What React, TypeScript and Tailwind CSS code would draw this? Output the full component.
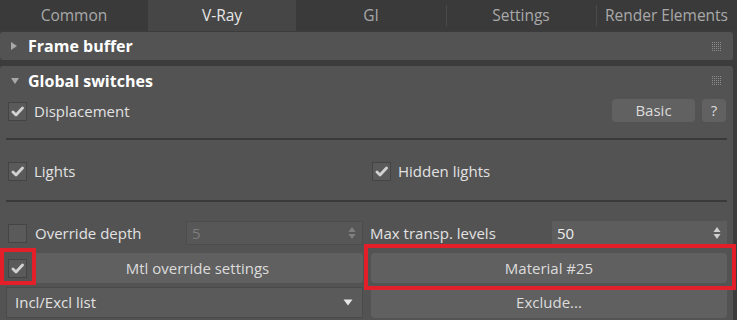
import React from "react";

const font = { fontFamily: '"Open Sans", "Noto Sans", sans-serif' };

function Check({ checked }: { checked: boolean }) {
  return (
    <div className="w-[19px] h-[19px] bg-[#5a5a5a] border border-[#444] flex items-center justify-center shrink-0">
      {checked && (
        <svg width="13" height="11" viewBox="0 0 13 11">
          <path d="M2 6 L5 9 L11.5 2" stroke="#d2d2d2" strokeWidth="2.8" fill="none" strokeLinecap="round" strokeLinejoin="round" />
        </svg>
      )}
    </div>
  );
}

function Grip() {
  const dots = [];
  for (let r = 0; r < 5; r++)
    for (let c = 0; c < 5; c++) dots.push(<rect key={r * 5 + c} x={c * 2} y={r * 2} width="1" height="1" fill="#8c8c8c" />);
  return (
    <svg width="9" height="9" viewBox="0 0 9 9" className="shrink-0">
      {dots}
    </svg>
  );
}

function SpinArrows({ color }: { color: string }) {
  return (
    <svg width="8" height="14" viewBox="0 0 8 14" className="shrink-0">
      <path d="M4 1 L7.5 6 L0.5 6 Z" fill={color} />
      <path d="M4 13 L7.5 8 L0.5 8 Z" fill={color} />
    </svg>
  );
}

function Tab({ label, active, sep }: { label: string; active?: boolean; sep?: boolean }) {
  return (
    <div
      className={`flex-1 flex items-center justify-center h-full text-[15.5px] relative ${
        active ? "bg-[#464646] text-[#e6e6e6]" : "text-[#a9a9a9]"
      }`}
    >
      {sep && <div className="absolute left-0 top-[5px] bottom-[5px] w-px bg-[#4a4a4a]" />}
      {label}
    </div>
  );
}

export default function App() {
  return (
    <div className="w-[737px] h-[320px] bg-[#3c3c3c] overflow-hidden flex flex-col" style={font}>
      {/* Tabs */}
      <div className="h-[31px] flex bg-[#3a3a3a] shrink-0">
        <div className="w-[148px] h-full flex"><Tab label="Common" /></div>
        <div className="w-[148px] h-full flex"><Tab label="V-Ray" active /></div>
        <div className="w-[150px] h-full flex"><Tab label="GI" /></div>
        <div className="w-[150px] h-full flex"><Tab label="Settings" sep /></div>
        <div className="w-[141px] h-full flex"><Tab label="Render Elements" sep /></div>
      </div>

      <div className="w-[733px] flex flex-col pt-px">
        {/* Frame buffer */}
        <div className="h-[28px] bg-[#535353] rounded-[3px] flex items-center pl-[10px] pr-[12px] shrink-0">
          <svg width="8" height="10" viewBox="0 0 8 10" className="shrink-0">
            <path d="M1 1 L7 5 L1 9 Z" fill="#a8a8a8" />
          </svg>
          <span className="ml-[10px] text-[16px] font-bold text-white flex-1 leading-none">Frame buffer</span>
          <Grip />
        </div>

        {/* Global switches */}
        <div className="mt-[6px] h-[260px] bg-[#535353] rounded-t-[3px] flex flex-col px-[6px]">
          <div className="h-[29px] flex items-center pl-[4px] pr-[6px] shrink-0">
            <svg width="10" height="8" viewBox="0 0 10 8" className="shrink-0">
              <path d="M1 1 L9 1 L5 7 Z" fill="#a8a8a8" />
            </svg>
            <span className="ml-[8px] text-[16px] font-bold text-white flex-1 leading-none">Global switches</span>
            <Grip />
          </div>

          {/* Displacement row */}
          <div className="mt-[4px] h-[23px] flex items-center">
            <div className="ml-[2px] mt-[2px]"><Check checked /></div>
            <span className="ml-[7px] text-[15px] leading-none text-[#e2e2e2] flex-1 mt-[2px]">Displacement</span>
            <div className="w-[83px] h-[23px] rounded-[4px] bg-[#616161] text-[#dcdcdc] text-[15px] flex items-center justify-center">Basic</div>
            <div className="ml-[7px] mr-[1px] w-[24px] h-[23px] rounded-[4px] bg-[#616161] text-[#dcdcdc] text-[15px] flex items-center justify-center">?</div>
          </div>

          <div className="mt-[16px] h-[2px] bg-[#3a3a3a]" />

          {/* Lights row */}
          <div className="mt-[21px] h-[20px] grid grid-cols-2 gap-x-[7px]">
            <div className="flex items-center">
              <div className="ml-[2px]"><Check checked /></div>
              <span className="ml-[7px] text-[15px] leading-none text-[#e2e2e2] mt-[1px]">Lights</span>
            </div>
            <div className="flex items-center">
              <div className="ml-[2px]"><Check checked /></div>
              <span className="ml-[7px] text-[15px] leading-none text-[#e2e2e2] mt-[1px]">Hidden lights</span>
            </div>
          </div>

          <div className="mt-[19px] h-[2px] bg-[#3a3a3a]" />

          {/* Override depth row */}
          <div className="mt-[19px] h-[24px] grid grid-cols-2 gap-x-[7px]">
            <div className="flex items-center">
              <div className="ml-[2px]"><Check checked={false} /></div>
              <span className="ml-[8px] text-[15px] leading-none text-[#e2e2e2] flex-1">Override depth</span>
              <div className="w-[177px] h-[24px] bg-[#575757] border border-[#4c4c4c] flex items-center pl-[5px] pr-[6px]">
                <span className="flex-1 text-[15px] leading-none text-[#7d7d7d]">5</span>
                <SpinArrows color="#808080" />
              </div>
            </div>
            <div className="flex items-center">
              <span className="text-[15px] leading-none text-[#e2e2e2] flex-1">Max transp. levels</span>
              <div className="w-[175px] h-[24px] bg-[#5d5d5d] flex items-center pl-[5px] pr-[6px]">
                <span className="flex-1 text-[15px] leading-none text-[#ececec]">50</span>
                <SpinArrows color="#cfcfcf" />
              </div>
            </div>
          </div>

          {/* Mtl override row */}
          <div className="mt-[8px] h-[30px] grid grid-cols-2 gap-x-[7px]">
            <div className="flex items-center relative">
              <div className="ml-[2px]"><Check checked /></div>
              <div className="ml-[5px] flex-1 h-[30px] rounded-[4px] bg-[#606060] text-[#dcdcdc] text-[15px] flex items-center justify-center">
                Mtl override settings
              </div>
              <div className="absolute left-[-6px] top-[-5px] w-[36px] h-[37px] border-4 border-[#e3202a]" />
            </div>
            <div className="flex items-center relative">
              <div className="ml-px flex-1 h-[30px] rounded-[4px] bg-[#606060] text-[#dcdcdc] text-[15px] flex items-center justify-center">
                Material #25
              </div>
              <div className="absolute left-[-6px] top-[-9px] w-[372px] h-[46px] border-4 border-[#e3202a]" />
            </div>
          </div>

          {/* Incl/Excl row */}
          <div className="mt-[4px] h-[31px] grid grid-cols-2 gap-x-[7px]">
            <div className="h-[31px] bg-[#5a5a5a] border border-[#4a4a4a] flex items-center pl-[8px] pr-[9px]">
              <span className="flex-1 text-[15px] text-[#e2e2e2]">Incl/Excl list</span>
              <svg width="10" height="7" viewBox="0 0 10 7">
                <path d="M0.5 0.5 L9.5 0.5 L5 6.5 Z" fill="#e6e6e6" />
              </svg>
            </div>
            <div className="ml-px h-[31px] rounded-[4px] bg-[#606060] text-[#dcdcdc] text-[15px] flex items-center justify-center">
              Exclude...
            </div>
          </div>
        </div>
      </div>
    </div>
  );
}
